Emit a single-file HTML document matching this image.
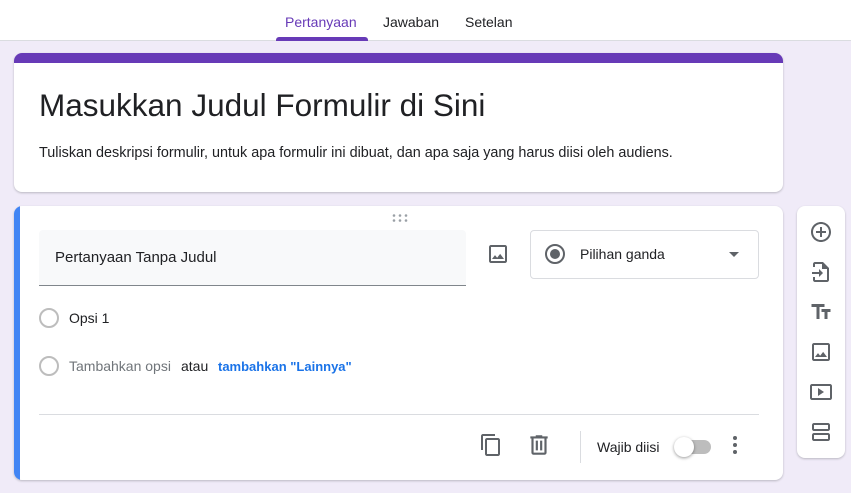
<!DOCTYPE html>
<html><head><meta charset="utf-8"><style>
*{box-sizing:border-box;margin:0;padding:0}
body{width:851px;height:493px;background:#f0ebf8;font-family:"Liberation Sans",sans-serif;position:relative;overflow:hidden;color:#202124}
.hdr{position:absolute;left:0;top:0;width:851px;height:41px;background:#fff;border-bottom:1px solid #dadce0}
.tab{position:absolute;top:14px;font-size:14px;color:#202124}
.card{position:absolute;background:#fff;border-radius:8px;box-shadow:0 1px 2px rgba(60,64,67,.3)}
.a{position:absolute}
.radio{position:absolute;width:20px;height:20px;border:2px solid #bdbdbd;border-radius:50%}
svg{position:absolute}
</style></head><body>
<div class="hdr">
<div class="tab" style="left:285px;color:#673ab7">Pertanyaan</div>
<div class="tab" style="left:383px">Jawaban</div>
<div class="tab" style="left:465px">Setelan</div>
<div class="a" style="left:276px;top:37px;width:92px;height:4px;background:#673ab7;border-radius:3px 3px 0 0"></div>
</div>
<div class="card" style="left:14px;top:53px;width:769px;height:139px;overflow:hidden">
<div class="a" style="left:0;top:0;width:769px;height:10px;background:#673ab7"></div>
<div class="a" style="left:25px;top:33px;font-size:31.5px;line-height:38px">Masukkan Judul Formulir di Sini</div>
<div class="a" style="left:25px;top:92px;font-size:14.4px">Tuliskan deskripsi formulir, untuk apa formulir ini dibuat, dan apa saja yang harus diisi oleh audiens.</div>
</div>
<div class="card" style="left:14px;top:206px;width:769px;height:274px;overflow:hidden">
<div class="a" style="left:0;top:0;width:6px;height:274px;background:#4285f4"></div>
<svg style="left:378px;top:8px" width="16" height="8"><g fill="#9aa0a6"><circle cx="2" cy="1.5" r="1.3"/><circle cx="8" cy="1.5" r="1.3"/><circle cx="14" cy="1.5" r="1.3"/><circle cx="2" cy="6.5" r="1.3"/><circle cx="8" cy="6.5" r="1.3"/><circle cx="14" cy="6.5" r="1.3"/></g></svg>
<div class="a" style="left:25px;top:24px;width:427px;height:56px;background:#f8f9fa;border-bottom:1px solid #80868b;border-radius:4px 4px 0 0"></div>
<div class="a" style="left:41px;top:43px;font-size:15px">Pertanyaan Tanpa Judul</div>
<svg style="left:472px;top:36px" width="24" height="24" viewBox="0 0 24 24"><path fill="#5f6368" d="M19 5v14H5V5h14m0-2H5c-1.1 0-2 .9-2 2v14c0 1.1.9 2 2 2h14c1.1 0 2-.9 2-2V5c0-1.1-.9-2-2-2zm-4.860 8.86l-3 3.87L9 13.14 6 17h12l-3.86-5.14z"/></svg>
<div class="a" style="left:516px;top:24px;width:229px;height:49px;border:1px solid #dadce0;border-radius:4px"></div>
<div class="a" style="left:531px;top:38px;width:20px;height:20px;border:2px solid #5f6368;border-radius:50%"></div>
<div class="a" style="left:536px;top:43px;width:10px;height:10px;background:#5f6368;border-radius:50%"></div>
<div class="a" style="left:566px;top:40px;font-size:14px">Pilihan ganda</div>
<div class="a" style="left:715px;top:46px;border-left:5px solid transparent;border-right:5px solid transparent;border-top:5px solid #5f6368"></div>
<div class="radio" style="left:25px;top:102px"></div>
<div class="a" style="left:55px;top:104px;font-size:14px">Opsi 1</div>
<div class="radio" style="left:25px;top:150px"></div>
<div class="a" style="left:55px;top:152px;font-size:14px;color:#70757a">Tambahkan opsi</div>
<div class="a" style="left:167px;top:152px;font-size:14px">atau</div>
<div class="a" style="left:204px;top:153px;font-size:13px;color:#1a73e8;font-weight:bold">tambahkan "Lainnya"</div>
<div class="a" style="left:25px;top:208px;width:720px;height:1px;background:#dadce0"></div>
<svg style="left:465px;top:227px" width="24" height="24" viewBox="0 0 24 24"><path fill="#5f6368" d="M16 1H4c-1.1 0-2 .9-2 2v14h2V3h12V1zm3 4H8c-1.1 0-2 .9-2 2v14c0 1.1.9 2 2 2h11c1.1 0 2-.9 2-2V7c0-1.1-.9-2-2-2zm0 16H8V7h11v14z"/></svg>
<svg style="left:512px;top:226px" width="26" height="26" viewBox="0 0 24 24"><path fill="#5f6368" d="M15 4V3H9v1H4v2h1v13c0 1.1.9 2 2 2h10c1.1 0 2-.9 2-2V6h1V4h-5zm2 15H7V6h10v13zM9 8h2v9H9zm4 0h2v9h-2z"/></svg>
<div class="a" style="left:566px;top:225px;width:1px;height:32px;background:#dadce0"></div>
<div class="a" style="left:583px;top:233px;font-size:14px">Wajib diisi</div>
<div class="a" style="left:667px;top:234px;width:30px;height:14px;border-radius:7px;background:#bdbdbd"></div>
<div class="a" style="left:660px;top:231px;width:20px;height:20px;border-radius:50%;background:#fff;box-shadow:0 1px 3px rgba(0,0,0,.4)"></div>
<svg style="left:718px;top:229px" width="6" height="20"><g fill="#5f6368"><circle cx="3" cy="3" r="2"/><circle cx="3" cy="10" r="2"/><circle cx="3" cy="17" r="2"/></g></svg>
</div>
<div class="card" style="left:797px;top:206px;width:48px;height:252px">
<svg style="left:12px;top:14px" width="24" height="24" viewBox="0 0 24 24"><path fill="#5f6368" d="M13 7h-2v4H7v2h4v4h2v-4h4v-2h-4V7zm-1-5C6.480 2 2 6.48 2 12s4.48 10 10 10 10-4.48 10-10S17.52 2 12 2zm0 18c-4.41 0-8-3.59-8-8s3.59-8 8-8 8 3.59 8 8-3.59 8-8 8z"/></svg>
<svg style="left:12px;top:54px" width="24" height="24" viewBox="0 0 24 24"><path fill="#5f6368" d="M14 2H6c-1.1 0-2 .9-2 2v3h2V4h7v5h5v11H6v-3H4v3c0 1.1.9 2 2 2h12c1.1 0 2-.9 2-2V8l-6-6zM10 17l4-4-4-4v3H3v2h7z"/></svg>
<svg style="left:12px;top:94px" width="24" height="24" viewBox="0 0 24 24"><path fill="#5f6368" d="M2.5 4v3h5v12h3V7h5V4h-13zm19 5h-9v3h3v7h3v-7h3V9z"/></svg>
<svg style="left:12px;top:134px" width="24" height="24" viewBox="0 0 24 24"><path fill="#5f6368" d="M19 5v14H5V5h14m0-2H5c-1.1 0-2 .9-2 2v14c0 1.1.9 2 2 2h14c1.1 0 2-.9 2-2V5c0-1.1-.9-2-2-2zm-4.86 8.86l-3 3.87L9 13.14 6 17h12l-3.86-5.14z"/></svg>
<svg style="left:12px;top:174px" width="24" height="24" viewBox="0 0 24 24"><path fill="#5f6368" d="M21 4H3c-1.1 0-2 .9-2 2v12c0 1.1.9 2 2 2h18c1.1 0 2-.9 2-2V6c0-1.1-.9-2-2-2zm0 14H3V6h18v12zM9 8v8l6-4z"/></svg>
<svg style="left:12px;top:214px" width="24" height="24" viewBox="0 0 24 24"><path fill="#5f6368" d="M19 3H5c-1.1 0-2 .9-2 2v4c0 1.1.9 2 2 2h14c1.1 0 2-.9 2-2V5c0-1.1-.9-2-2-2zm0 6H5V5h14v4zm0 4H5c-1.1 0-2 .9-2 2v4c0 1.1.9 2 2 2h14c1.1 0 2-.9 2-2v-4c0-1.1-.9-2-2-2zm0 6H5v-4h14v4z"/></svg>
</div>
</body></html>
